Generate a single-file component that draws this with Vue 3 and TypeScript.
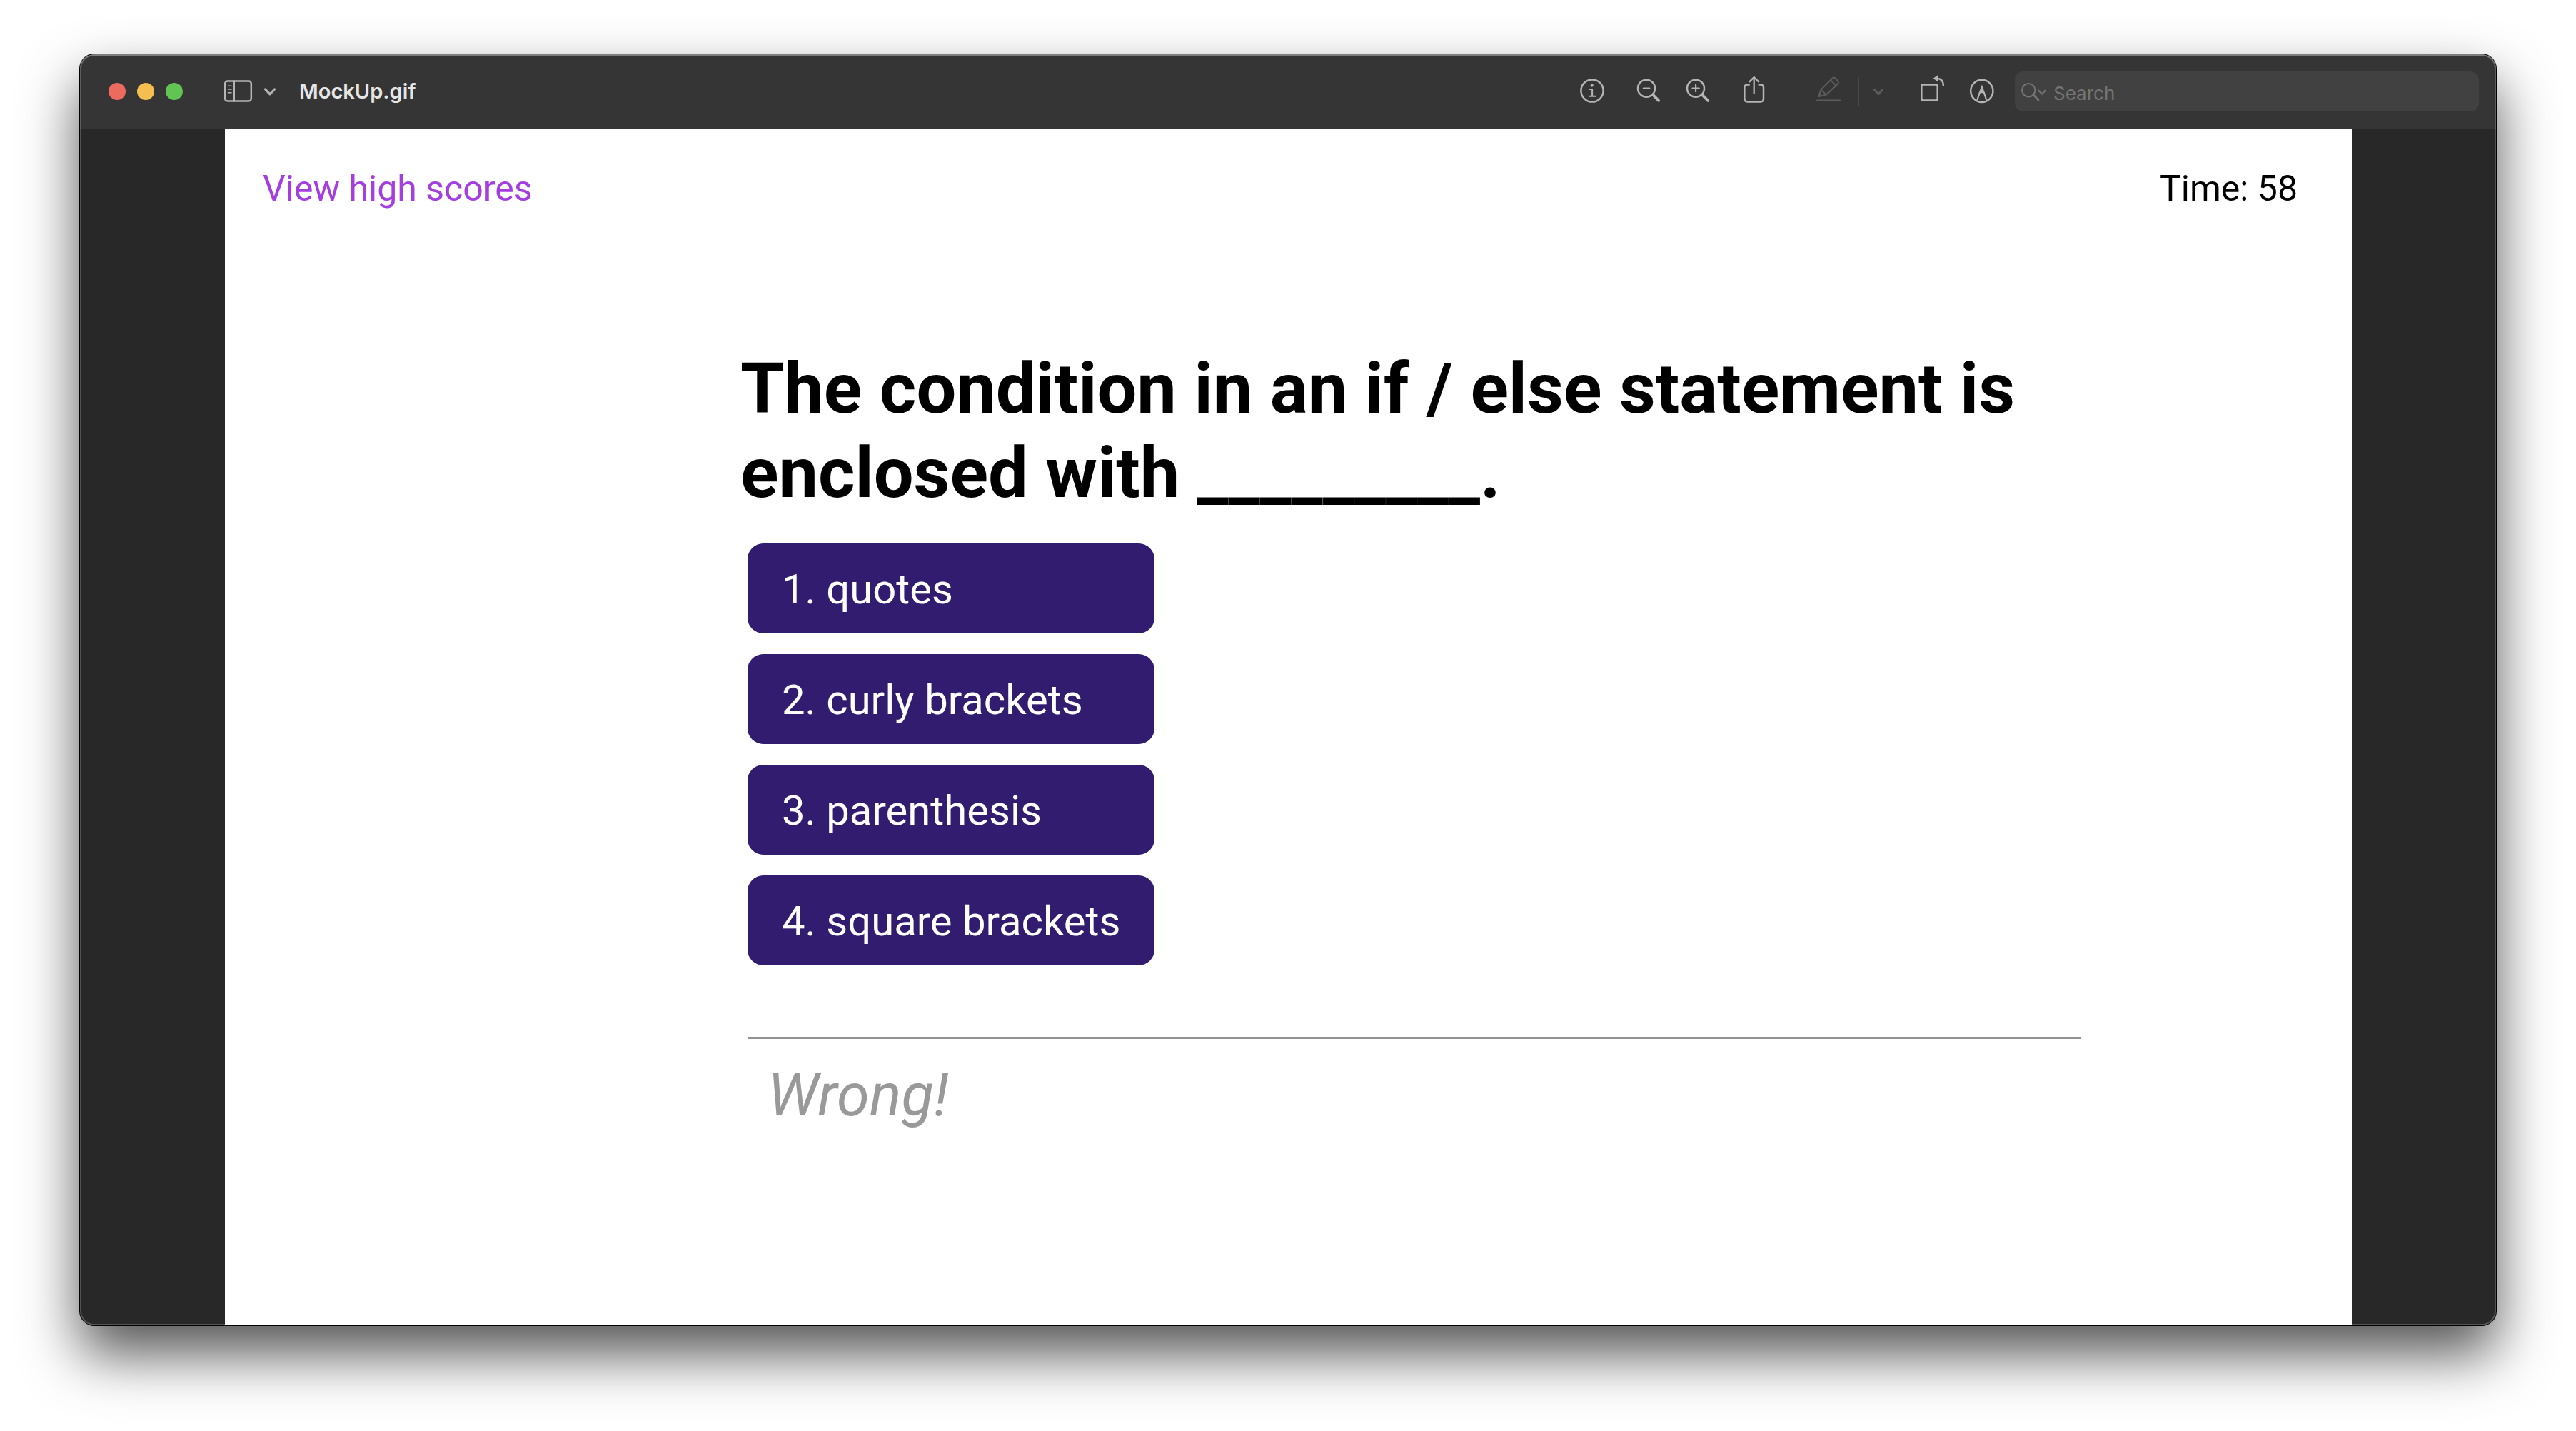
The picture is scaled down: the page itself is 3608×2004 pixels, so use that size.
<script setup lang="ts">
import { ref } from 'vue'

const fileName = 'MockUp.gif'
const query = ref('')
const secondsLeft = ref(58)
const answers: string[] = ['quotes', 'curly brackets', 'parenthesis', 'square brackets']
const feedback = ref('Wrong!')

function choose(answer: string): void {
  feedback.value = answer === 'parenthesis' ? 'Correct!' : 'Wrong!'
}
</script>

<template>
  <div class="desktop">
    <div class="window">
      <header class="titlebar">
        <div class="lights">
          <button class="light close" type="button" aria-label="Close"></button>
          <button class="light minimise" type="button" aria-label="Minimise"></button>
          <button class="light zoom" type="button" aria-label="Zoom"></button>
        </div>
        <button class="tool sidebar" type="button" aria-label="Sidebar">
          <svg width="73" height="48" viewBox="0 0 73 48">
            <rect x="1.2" y="9.5" width="36.6" height="28" rx="3.5" />
            <path d="M14 9.5V37.5" stroke-width="2" />
            <path d="M5.5 16.3h4.5M5.5 21h4.5M5.5 25.7h4.5" stroke-width="1.6" />
            <path d="M57.5 21l6.5 6.8 6.5-6.8" stroke-width="3.2" />
          </svg>
        </button>
        <h1 class="file-name">{{ fileName }}</h1>

        <div class="tools">
          <button class="tool" type="button" aria-label="Info">
            <svg width="34" height="48" viewBox="0 0 34 48">
              <circle cx="17" cy="23" r="15.6" />
              <circle class="solid" cx="16.7" cy="15.6" r="2.1" />
              <path d="M13.5 21h3.6v9.7M12.9 30.8h8.6" stroke-width="2" />
            </svg>
          </button>
          <button class="tool after-wide" type="button" aria-label="Zoom out">
            <svg width="34" height="48" viewBox="0 0 34 48">
              <circle cx="14" cy="19.7" r="12" />
              <path d="M23.5 29.2l7.6 7.6" stroke-width="4" />
              <path d="M9.8 19.5h8.6" stroke-width="2.2" />
            </svg>
          </button>
          <button class="tool after-narrow" type="button" aria-label="Zoom in">
            <svg width="34" height="48" viewBox="0 0 34 48">
              <circle cx="14" cy="19.7" r="12" />
              <path d="M23.5 29.2l7.6 7.6" stroke-width="4" />
              <path d="M9.4 19.5h9.4M14.1 14.8v9.4" stroke-width="2.2" />
            </svg>
          </button>
          <button class="tool after-wide" type="button" aria-label="Share">
            <svg width="34" height="48" viewBox="0 0 34 48">
              <path d="M10.7 14.6H7a3.7 3.7 0 0 0-3.7 3.7v16.4A3.7 3.7 0 0 0 7 38.4h19.3a3.7 3.7 0 0 0 3.7-3.7V18.3a3.7 3.7 0 0 0-3.7-3.7h-3.7" stroke-linecap="butt" />
              <path d="M16.7 4.6v22M10.3 10.4l6.4-6.2 6.4 6.2" stroke-width="2.3" />
            </svg>
          </button>
          <button class="tool dim pencil" type="button" aria-label="Highlight" disabled>
            <svg width="34" height="48" viewBox="0 0 34 48">
              <path d="M1 36.7h32" stroke-width="2.4" />
              <path d="M3 31.2l3.6-9.8L22 6q2.4-2.4 4.8 0l3 3q2.4 2.3 0 4.7L14 28.6zM19.9 8.2l7.8 7.7M6.6 21.6l7.3 7" stroke-width="2" />
              <path class="solid" d="M2.2 32l2-5.2 3.6 3.4z" />
            </svg>
          </button>
          <span class="divider"></span>
          <button class="tool dim more" type="button" aria-label="Highlight colours" disabled>
            <svg width="16" height="48" viewBox="0 0 16 48">
              <path d="M2.5 21.8l5.5 5.8 5.5-5.8" stroke-width="3" />
            </svg>
          </button>
          <button class="tool rotate" type="button" aria-label="Rotate left">
            <svg width="34" height="48" viewBox="0 0 34 48">
              <rect x="1.3" y="14.6" width="22.4" height="22" rx="2.4" />
              <path d="M23 5.8q8.9.2 8.9 10.4" stroke-width="2.3" stroke-linecap="butt" />
              <path class="solid" d="M17.6 5.7L24 1.2v9z" />
            </svg>
          </button>
          <button class="tool after-narrow" type="button" aria-label="Markup">
            <svg width="34" height="48" viewBox="0 0 34 48">
              <circle cx="16.8" cy="23.3" r="15.6" />
              <path d="M14 25.2L10.3 36M19.6 25.2L23.3 36" stroke-width="2.2" stroke-linecap="butt" />
              <path class="solid" d="M16.8 14.6l4.2 11.6h-8.4z" />
            </svg>
          </button>
          <label class="search">
            <svg width="36" height="28" viewBox="0 0 36 28">
              <circle cx="10.2" cy="12.2" r="9.2" stroke-width="2" />
              <path d="M17.2 19l6.8 7" stroke-width="2.8" />
              <path d="M24 12.4l5 5.2 5-5.2" stroke-width="2.2" />
            </svg>
            <input v-model="query" type="search" placeholder="Search" aria-label="Search" />
          </label>
        </div>
      </header>

      <div class="viewer">
        <main class="quiz">
          <nav class="status">
            <a href="#scores">View high scores</a>
            <span>Time: {{ secondsLeft }}</span>
          </nav>
          <section class="question">
            <h2>The condition in an if / else statement is enclosed with _________.</h2>
            <div class="body">
              <ol class="answers">
                <li v-for="(answer, i) in answers" :key="answer">
                  <button type="button" @click="choose(answer)">{{ i + 1 }}. {{ answer }}</button>
                </li>
              </ol>
              <p class="feedback">{{ feedback }}</p>
            </div>
          </section>
        </main>
      </div>
    </div>
  </div>
</template>

<style>
body {
  margin: 0;
  background: #fff;
}
</style>

<style scoped>
.desktop {
  box-sizing: border-box;
  display: flex;
  min-height: 100vh;
  padding: 76px 112px 148px;
  overflow: hidden;
  font-family: Roboto, "Liberation Sans", sans-serif;
}

.window {
  position: relative;
  display: flex;
  flex: 1;
  flex-direction: column;
  min-width: 0;
  border-radius: 20px;
  background: #282828;
  box-shadow: 0 0 0 1px #000, 0 40px 80px rgba(0, 0, 0, 0.68);
}

/* light rim that lies over the bar and the page */
.window::after {
  content: "";
  position: absolute;
  inset: 0;
  border-radius: 20px;
  box-shadow: inset 0 2px 0 rgba(255, 255, 255, 0.2), inset 0 0 0 2px rgba(255, 255, 255, 0.2);
  pointer-events: none;
}

.titlebar {
  display: flex;
  align-items: center;
  height: 104px;
  padding: 0 24px 0 40px;
  border-bottom: 1px solid #000;
  border-radius: 20px 20px 0 0;
  background: #353535;
}

.lights {
  display: flex;
  gap: 16px;
}

.light {
  width: 24px;
  height: 24px;
  padding: 0;
  border: 0;
  border-radius: 50%;
}

.close {
  background: #ec6a5e;
}

.minimise {
  background: #f4bf4f;
}

.zoom {
  background: #61c554;
}

.tool {
  display: block;
  flex: none;
  padding: 0;
  border: 0;
  background: none;
  color: #b4b4b4;
}

.tool svg,
.search svg {
  display: block;
  flex: none;
  fill: none;
  stroke: currentColor;
  stroke-width: 2.5;
  stroke-linecap: round;
  stroke-linejoin: round;
}

.tool .solid {
  fill: currentColor;
  stroke: none;
}

.sidebar {
  margin-left: 58px;
}

.file-name {
  margin: 0 0 0 32px;
  color: #e6e6e6;
  font: 600 29px/40px Inter, "Liberation Sans", sans-serif;
}

.tools {
  display: flex;
  align-items: center;
  margin-left: auto;
}

.after-wide {
  margin-left: 45px;
}

.after-narrow {
  margin-left: 35px;
}

.pencil {
  margin-left: 70px;
}

.dim {
  color: #5c5c5c;
}

.divider {
  width: 2px;
  height: 40px;
  margin: 0 19px 0 24px;
  background: #484848;
}

.rotate {
  margin-left: 51px;
}

.search {
  box-sizing: border-box;
  display: flex;
  align-items: center;
  width: 650px;
  height: 56px;
  margin-left: 29px;
  padding: 0 9px;
  border-radius: 12px;
  background: #414141;
  color: #747474;
}

.search input {
  flex: 1;
  min-width: 0;
  height: 56px;
  margin-left: 9px;
  padding: 4px 0 0;
  border: 0;
  outline: 0;
  background: none;
  color: #e6e6e6;
  font: 400 26px/40px Inter, "Liberation Sans", sans-serif;
  appearance: none;
}

.search input::placeholder {
  color: #747474;
  opacity: 1;
}

.viewer {
  display: flex;
  flex: 1;
  padding: 0 202px 0 203px;
}

.quiz {
  flex: 1;
  min-width: 0;
  background: #fff;
}

.status {
  display: flex;
  justify-content: space-between;
  padding: 53px 76px 0 53px;
  color: #000;
  font-size: 50px;
  line-height: 60px;
}

.status a {
  color: #a43ee0;
  text-decoration: none;
}

.question {
  padding: 191px 379px 80px 722px;
}

.question h2 {
  margin: 0;
  color: #000;
  font-size: 99px;
  font-weight: 700;
  line-height: 118px;
}

.body {
  padding-left: 10px;
}

.answers {
  display: flex;
  flex-direction: column;
  align-items: stretch;
  gap: 29px;
  width: max-content;
  margin: 0;
  padding: 40px 0 100px;
  list-style: none;
}

.answers button {
  display: block;
  width: 100%;
  height: 126px;
  padding: 2px 48px 0;
  border: 0;
  border-radius: 22px;
  background: #321c70;
  color: #fff;
  font: 400 58px/72px Roboto, "Liberation Sans", sans-serif;
  text-align: left;
}

.feedback {
  margin: 0;
  padding: 30px 28px;
  border-top: 3px solid #929292;
  color: #999;
  font-size: 83px;
  font-style: italic;
  line-height: 98px;
}
</style>
